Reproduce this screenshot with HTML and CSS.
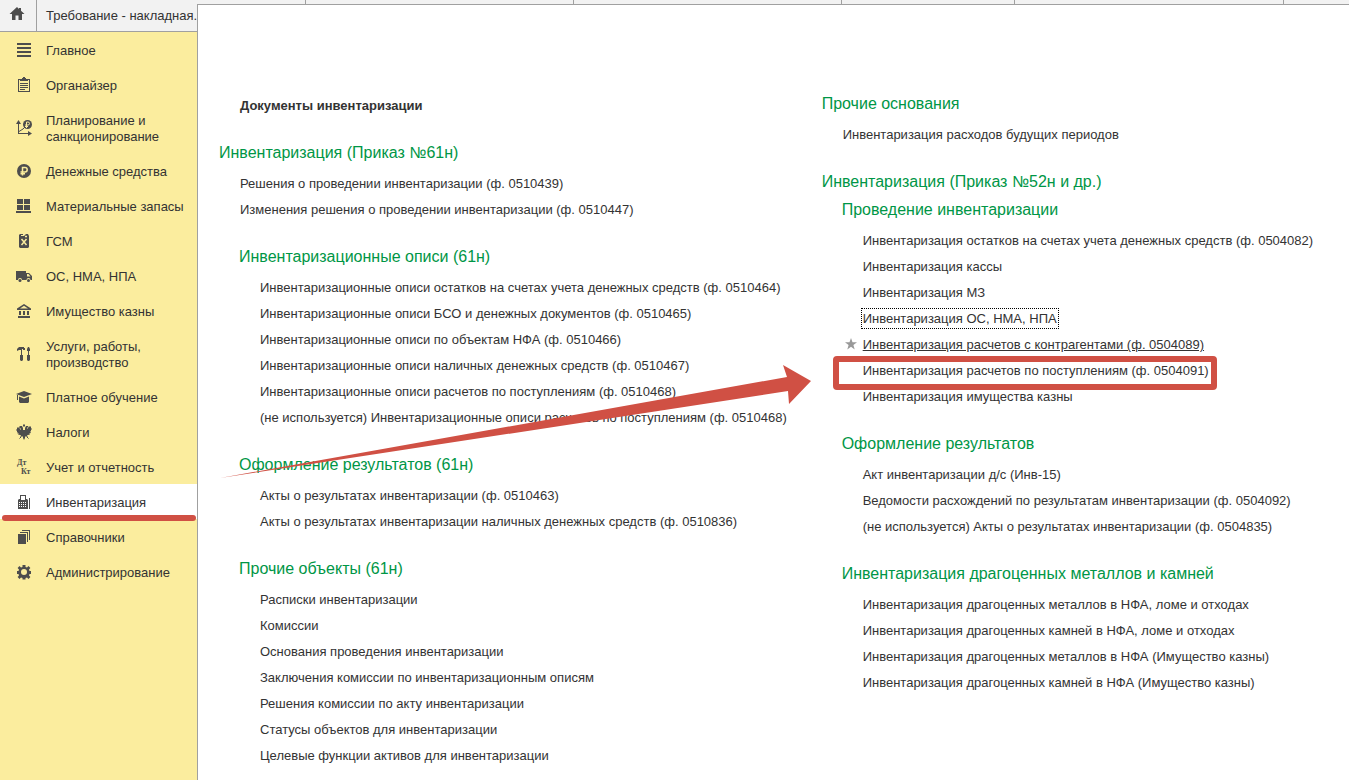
FILE: index.html
```html
<!DOCTYPE html>
<html lang="ru">
<head>
    <meta charset="UTF-8">
    <title>Инвентаризация</title>
    <meta name="viewport" content="width=device-width, initial-scale=1.0">
    <link rel="stylesheet" href="styles.css">
</head>
<body>
    <header class="tabs">
        <a class="tab tab-home" href="#">
            <svg class="icon" viewBox="0 0 16 16"><path d="M8 1L0.5 8H3v6h3.500V9.500h3V14H13V8h2.500L12 4.700V2h-2v0.900z"/></svg>
        </a>
        <a class="tab" href="#">Требование - накладная...</a>
        <span class="tab"></span>
        <span class="tab"></span>
        <span class="tab tab-short"></span>
        <span class="tab"></span>
        <span class="tab tab-rest"></span>
    </header>

    <nav class="sidebar">
        <a class="section" href="#">
            <svg class="icon" viewBox="0 0 16 16"><path d="M1 1h14v2H1zM1 5h14v2H1zM1 9h14v2H1zM1 13h14v2H1z"/></svg>
            <span>Главное</span>
        </a>
        <a class="section" href="#">
            <svg class="icon" viewBox="0 0 16 16"><path d="M2 2h12v13H2zM3 3v11h10V3z" fill-rule="evenodd"/><path d="M4 2h2V1h1V0h2v1h1v1h2v2H4zM4 6h8v1H4zM4 8h8v1H4zM4 10h8v1H4zM4 12h5v1H4z"/></svg>
            <span>Органайзер</span>
        </a>
        <a class="section" href="#">
            <svg class="icon" viewBox="0 0 16 16">
                <path d="M2 2h1v11h10v1H2zM0 4l2.500-4L5 4zM12 11l4 2.500L12 16z"/>
                <path class="line" d="M3 11.500L7 9l3-3"/>
                <circle cx="11.500" cy="4.500" r="4.500"/>
                <path class="line light" d="M10.500 8V2h1.500a1.500 1.500 0 0 1 0 3H9M9 6.500h3"/>
            </svg>
            <span>Планирование и<br>санкционирование</span>
        </a>
        <a class="section" href="#">
            <svg class="icon" viewBox="0 0 16 16">
                <circle cx="8" cy="8" r="7"/>
                <path class="line light ruble" d="M6.500 12.500V4.500h2.500a2.200 2.200 0 0 1 0 4.400H4.500M4.500 10.800h4.500"/>
            </svg>
            <span>Денежные средства</span>
        </a>
        <a class="section" href="#">
            <svg class="icon" viewBox="0 0 16 16"><path d="M1 1h6v5H1zM8 1h6v5H8zM1 7h6v5H1zM8 7h6v5H8zM0 13h15v2H0z"/></svg>
            <span>Материальные запасы</span>
        </a>
        <a class="section" href="#">
            <svg class="icon" viewBox="0 0 16 16">
                <path d="M3 2l1-1h3v1H5v1h3l2-2h2l1 2v11l-1 1H4l-1-1z"/>
                <path class="line light ruble" d="M5.500 6l5 6M10.500 6l-5 6M9 3.500h2"/>
            </svg>
            <span>ГСМ</span>
        </a>
        <a class="section" href="#">
            <svg class="icon" viewBox="0 0 16 16">
                <path d="M0 3h10v2h3l3 3v4h-1.500a2 2 0 0 0-4 0H6a2 2 0 0 0-4 0H0z"/>
                <path class="light-fill" d="M11 6h1.500l2 2.500H11z"/>
                <circle cx="4" cy="12.500" r="1.500"/><circle cx="12.500" cy="12.500" r="1.500"/>
            </svg>
            <span>ОС, НМА, НПА</span>
        </a>
        <a class="section" href="#">
            <svg class="icon" viewBox="0 0 16 16"><path d="M8 1l7 4.500V7H1V5.500zM8 2.800L4 5.500h8z" fill-rule="evenodd"/><path d="M3 8h2v4H3zM7 8h2v4H7zM11 8h2v4h-2zM2 13h12v2H2z"/></svg>
            <span>Имущество казны</span>
        </a>
        <a class="section" href="#">
            <svg class="icon" viewBox="0 0 16 16"><path d="M1 3l2-2h5v1h1v2H7V3H6v6H5V4H3L1 5zM4 9h3v5l-1 1H5l-1-1zM12 1h1l1 2v2h-1v4h-1V5h-1V3zM11 9h3v5l-1 1h-1l-1-1z"/></svg>
            <span>Услуги, работы,<br>производство</span>
        </a>
        <a class="section" href="#">
            <svg class="icon" viewBox="0 0 16 16"><path d="M0 5l8-3 8 3-8 3zM3 7.500l5 2 5-2V13l-1 1H4l-1-1zM1 6h1v5H1z"/></svg>
            <span>Платное обучение</span>
        </a>
        <a class="section" href="#">
            <svg class="icon" viewBox="0 0 16 16"><path d="M7 1l1-1 1 1v1l-1 1-1-1zM4 2h2l1 2v2h2V4l1-2h2v1l-1 1v1l1-1 1-2 1 1 1-1v2l1 1-1 1v1l-1 1h1l-1 1.500h-1l1 1-2 0.500h-1l1 2-2-1-1 1v1l-1 2-1-2v-1l-1-1-2 1 1-2H4l-2-0.500 1-1H2L1 9h1L1 8V7L0 6l1-1V3l1 1 1-1 1 2 1 1V5L4 4 3 3z"/><path class="line" d="M3.500 14.500l2-2M12.500 14.500l-2-2"/></svg>
            <span>Налоги</span>
        </a>
        <a class="section" href="#">
            <svg class="icon" viewBox="0 0 16 16"><text x="1" y="6">Дт</text><text x="5" y="15">Кт</text></svg>
            <span>Учет и отчетность</span>
        </a>
        <a class="section section-active" href="#">
            <svg class="icon" viewBox="0 0 16 16">
                <path d="M4 1h6v4h1l1 1v9H2V6l1-1h1zM5 2v4h4V2z" fill-rule="evenodd"/>
                <path class="white-fill" d="M3 8h1v1H3zM5 8h1v1H5zM7 8h1v1H7zM9 8h1v1H9zM3 10h1v1H3zM5 10h1v1H5zM7 10h1v1H7zM9 10h1v1H9zM3 12h1v1H3zM5 12h1v1H5zM7 12h1v1H7zM9 12h1v1H9z"/>
                <path d="M13 4h1v11h-1z"/>
            </svg>
            <span>Инвентаризация</span>
        </a>
        <a class="section" href="#">
            <svg class="icon" viewBox="0 0 16 16"><path d="M2 5h8v10H2zM4 3h8v10h-1V4H4zM6 1h8v10h-1V2H6z"/></svg>
            <span>Справочники</span>
        </a>
        <a class="section" href="#">
            <svg class="icon" viewBox="0 0 16 16"><path d="M6.500 1h3v2l1.500 0.600 1.500-1.500 1.900 1.900-1.400 1.500 0.500 1.500h1.500v3h-1.500l-0.500 1.500 1.400 1.500-1.900 1.900-1.500-1.500-1.500 0.600v1.500h-3v-1.500l-1.500-0.600-1.500 1.500-1.900-1.900 1.400-1.500L2.500 10H1V7h1.500L3 5.500 1.600 4l1.900-1.900L5 3.600 6.500 3zM8 5a3 3 0 1 0 0 6 3 3 0 0 0 0-6z" fill-rule="evenodd"/></svg>
            <span>Администрирование</span>
        </a>
    </nav>

    <main class="panel">
        <div class="column column-first">
            <ul class="links">
                <li><a class="important" href="#">Документы инвентаризации</a></li>
            </ul>
            <h2>Инвентаризация (Приказ №61н)</h2>
            <ul class="links">
                <li><a href="#">Решения о проведении инвентаризации (ф. 0510439)</a></li>
                <li><a href="#">Изменения решения о проведении инвентаризации (ф. 0510447)</a></li>
            </ul>
            <div class="subgroup">
                <h3>Инвентаризационные описи (61н)</h3>
                <ul class="links">
                    <li><a href="#">Инвентаризационные описи остатков на счетах учета денежных средств (ф. 0510464)</a></li>
                    <li><a href="#">Инвентаризационные описи БСО и денежных документов (ф. 0510465)</a></li>
                    <li><a href="#">Инвентаризационные описи по объектам НФА (ф. 0510466)</a></li>
                    <li><a href="#">Инвентаризационные описи наличных денежных средств (ф. 0510467)</a></li>
                    <li><a href="#">Инвентаризационные описи расчетов по поступлениям (ф. 0510468)</a></li>
                    <li><a href="#">(не используется) Инвентаризационные описи расчетов по поступлениям (ф. 0510468)</a></li>
                </ul>
                <h3>Оформление результатов (61н)</h3>
                <ul class="links">
                    <li><a href="#">Акты о результатах инвентаризации (ф. 0510463)</a></li>
                    <li><a href="#">Акты о результатах инвентаризации наличных денежных средств (ф. 0510836)</a></li>
                </ul>
                <h3>Прочие объекты (61н)</h3>
                <ul class="links">
                    <li><a href="#">Расписки инвентаризации</a></li>
                    <li><a href="#">Комиссии</a></li>
                    <li><a href="#">Основания проведения инвентаризации</a></li>
                    <li><a href="#">Заключения комиссии по инвентаризационным описям</a></li>
                    <li><a href="#">Решения комиссии по акту инвентаризации</a></li>
                    <li><a href="#">Статусы объектов для инвентаризации</a></li>
                    <li><a href="#">Целевые функции активов для инвентаризации</a></li>
                </ul>
            </div>
        </div>

        <div class="column">
            <h2>Прочие основания</h2>
            <ul class="links">
                <li><a href="#">Инвентаризация расходов будущих периодов</a></li>
            </ul>
            <h2>Инвентаризация (Приказ №52н и др.)</h2>
            <div class="subgroup">
                <h3>Проведение инвентаризации</h3>
                <ul class="links">
                    <li><a href="#">Инвентаризация остатков на счетах учета денежных средств (ф. 0504082)</a></li>
                    <li><a href="#">Инвентаризация кассы</a></li>
                    <li><a href="#">Инвентаризация МЗ</a></li>
                    <li><a class="focused" href="#">Инвентаризация ОС, НМА, НПА</a></li>
                    <li>
                        <svg class="star" viewBox="0 0 14 14"><path d="M7 1l1.500 4.200H13L9.400 8l1.300 4.500L7 9.800l-3.700 2.700L4.600 8 1 5.200h4.500z"/></svg>
                        <a class="hovered" href="#">Инвентаризация расчетов с контрагентами (ф. 0504089)</a>
                    </li>
                    <li><a class="marked" href="#">Инвентаризация расчетов по поступлениям (ф. 0504091)</a></li>
                    <li><a href="#">Инвентаризация имущества казны</a></li>
                </ul>
                <h3>Оформление результатов</h3>
                <ul class="links">
                    <li><a href="#">Акт инвентаризации д/с (Инв-15)</a></li>
                    <li><a href="#">Ведомости расхождений по результатам инвентаризации (ф. 0504092)</a></li>
                    <li><a href="#">(не используется) Акты о результатах инвентаризации (ф. 0504835)</a></li>
                </ul>
                <h3>Инвентаризация драгоценных металлов и камней</h3>
                <ul class="links">
                    <li><a href="#">Инвентаризация драгоценных металлов в НФА, ломе и отходах</a></li>
                    <li><a href="#">Инвентаризация драгоценных камней в НФА, ломе и отходах</a></li>
                    <li><a href="#">Инвентаризация драгоценных металлов в НФА (Имущество казны)</a></li>
                    <li><a href="#">Инвентаризация драгоценных камней в НФА (Имущество казны)</a></li>
                </ul>
            </div>
        </div>

        <svg class="arrow" viewBox="0 0 592 114"><path d="M0 113L567 12 563 0l28 16-22 23-1-13z"/></svg>
    </main>
</body>
</html>
```
FILE: styles.css
```css
* {
    margin: 0;
    padding: 0;
    box-sizing: border-box;
}

body {
    position: relative;
    display: flex;
    flex-direction: column;
    min-height: 100vh;
    overflow-x: hidden;
    font-family: "Liberation Sans", Arial, sans-serif;
    font-size: 13px;
    line-height: 16px;
    color: #333;
    background: #fff;
}

a {
    color: inherit;
    text-decoration: none;
}

/* open windows */
.tabs {
    display: flex;
    height: 32px;
    overflow: hidden;
    background: #f2f2f2;
    border-bottom: 1px solid #a0a0a0;
}

.tab {
    flex: none;
    width: 268px;
    padding: 8px 9px;
    border-right: 1px solid #a0a0a0;
    white-space: nowrap;
}

.tab-home {
    width: 37px;
    padding-top: 6px;
}

.tab-short {
    width: 173px;
}

.tab:nth-child(2) {
    width: 269px;
}

.tab:nth-child(6) {
    width: 269px;
}

.tab-rest {
    flex: 1;
    border-right: none;
}

/* sections */
.sidebar {
    flex: 1;
    width: 197px;
    background: #fbed9e;
}

.section {
    position: relative;
    display: flex;
    align-items: center;
    gap: 14px;
    padding: 10px 0 8px 16px;
}

.section span {
    padding-top: 1px;
}

.section .icon {
    margin-bottom: 1px;
}

.section-active {
    background: #fff;
}

.section-active::after {
    content: "";
    position: absolute;
    left: 2px;
    right: 1px;
    bottom: -2px;
    z-index: 1;
    height: 6px;
    border-radius: 3px;
    background: #d05044;
}

.icon {
    flex: none;
    width: 16px;
    height: 16px;
    overflow: visible;
    fill: #4d4d4d;
}

.icon text {
    font-family: "Liberation Serif", serif;
    font-size: 8px;
    font-weight: bold;
}

.line {
    fill: none;
    stroke: #4d4d4d;
}

.light {
    stroke: #fbed9e;
}

.ruble {
    stroke-width: 1.5;
}

.light-fill {
    fill: #fbed9e;
}

.white-fill {
    fill: #fff;
}

/* section menu, opens over the tabs */
.panel {
    position: absolute;
    top: 4px;
    right: 0;
    bottom: 0;
    left: 197px;
    display: grid;
    grid-template-columns: 8fr 7fr;
    padding-left: 21px;
    background: #fff;
    border-top: 1px solid #a0a0a0;
    border-left: 1px solid #a0a0a0;
}

.column {
    padding-top: 86px;
    white-space: nowrap;
}

.column-first {
    padding-top: 88px;
}

h2, h3 {
    margin: 21px 0 5px;
    font-size: 16px;
    font-weight: normal;
    line-height: 26px;
    color: #009646;
}

.column > h2:first-child {
    margin-top: 0;
}

.subgroup {
    padding-left: 20px;
}

h2 + .subgroup {
    margin-top: -3px;
}

h2 + .subgroup > h3:first-child {
    margin-top: 0;
}

.links {
    padding-left: 21px;
    list-style: none;
}

.links li {
    position: relative;
    line-height: 26px;
}

.important {
    font-weight: bold;
}

.focused {
    padding: 2px 1px;
    margin-left: -2px;
    border: 1px dotted #000;
}

.hovered {
    text-decoration: underline;
}

.star {
    position: absolute;
    top: 5px;
    left: -19px;
    width: 14px;
    height: 14px;
    fill: #999;
}

.marked {
    position: relative;
}

.marked::after {
    content: "";
    position: absolute;
    top: -7px;
    right: -8px;
    bottom: -12px;
    left: -30px;
    border: 6px solid #d05044;
    border-radius: 4px;
}

.arrow {
    position: absolute;
    top: 360px;
    left: 22px;
    width: 592px;
    height: 114px;
    fill: #d05044;
}
```
